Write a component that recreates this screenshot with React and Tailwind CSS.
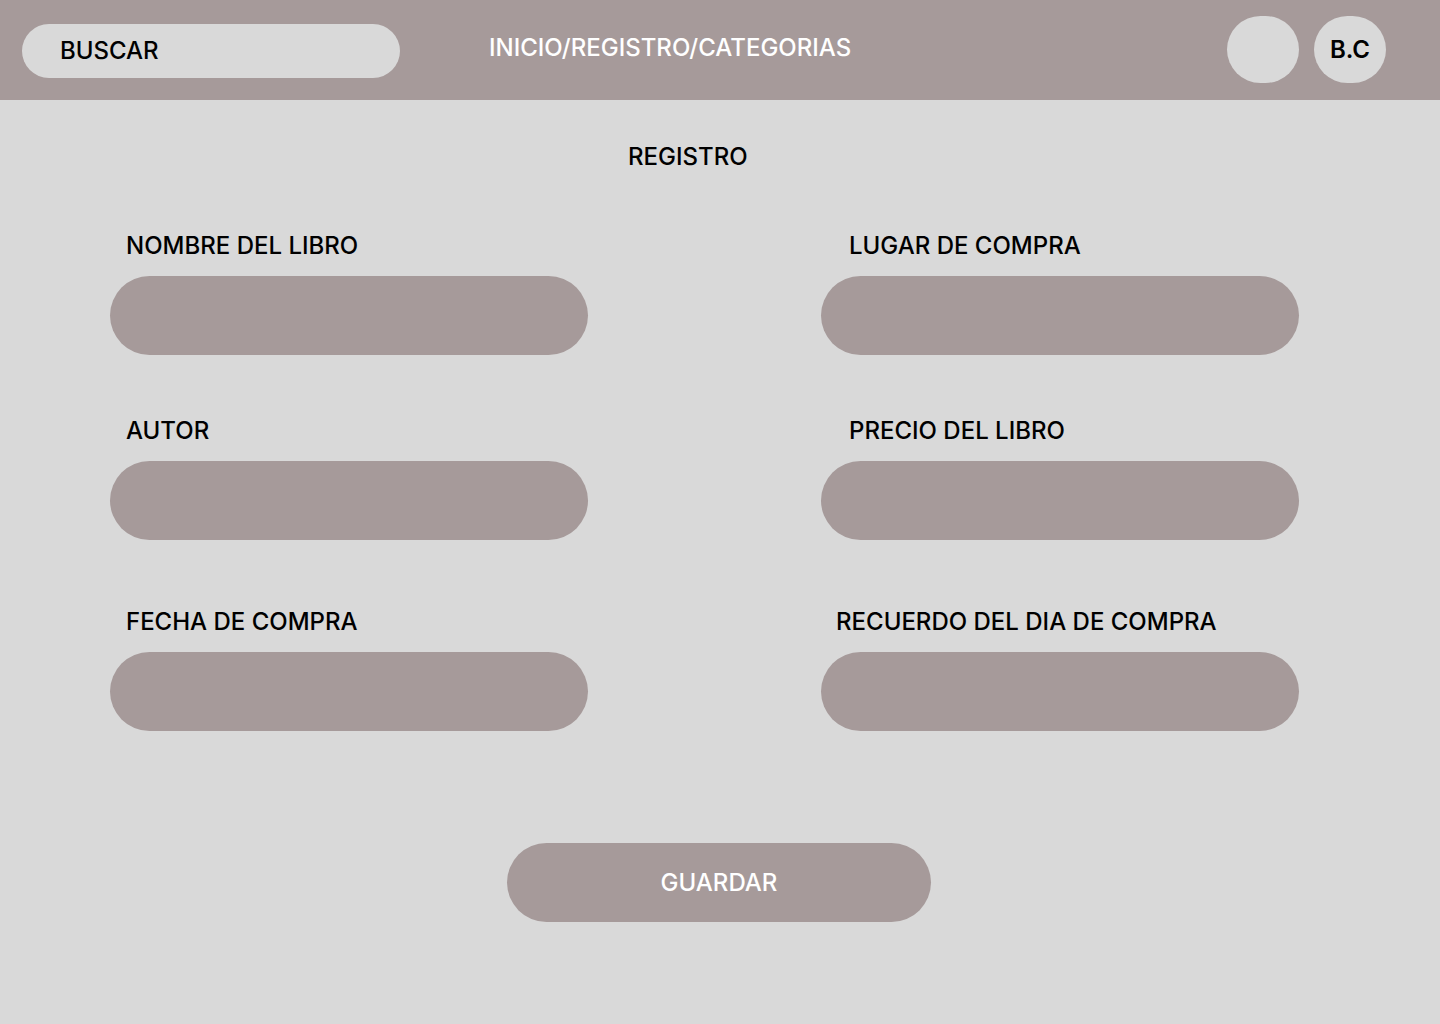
import React from "react";

const font = { fontFamily: "Inter, 'Noto Sans', sans-serif" };

function Field({ label, labelPad, className = "" }) {
  return (
    <div className={`flex flex-col ${className}`}>
      <div className={`text-[24px] leading-[29px] font-medium text-black ${labelPad}`}>{label}</div>
      <div className="mt-[16px] h-[79px] w-[478px] rounded-full bg-[#a69a9a]" />
    </div>
  );
}

export default function App() {
  return (
    <div className="min-h-[1024px] w-[1440px] bg-[#d9d9d9]" style={font}>
      <header className="flex h-[100px] items-start bg-[#a69a9a]">
        <div className="ml-[22px] mt-[24px] flex h-[54px] w-[378px] items-center rounded-full bg-[#d9d9d9] pl-[38px] text-[24px] font-medium text-black">
          BUSCAR
        </div>
        <div className="ml-[89px] mt-[33px] text-[24px] leading-[29px] font-medium text-white">
          INICIO/REGISTRO/CATEGORIAS
        </div>
        <div className="ml-auto mr-[54px] mt-[16px] flex gap-[15px]">
          <div className="h-[67px] w-[72px] rounded-full bg-[#d9d9d9]" />
          <div className="flex h-[67px] w-[72px] items-center justify-center rounded-full bg-[#d9d9d9] text-[24px] font-semibold text-black">
            B.C
          </div>
        </div>
      </header>
      <main className="flex flex-col">
        <div className="ml-[628px] mt-[42px] text-[24px] leading-[29px] font-medium text-black">REGISTRO</div>
        <div className="ml-[110px] mt-[60px] grid w-[1189px] grid-cols-[478px_478px] justify-between">
          <Field label="NOMBRE DEL LIBRO" labelPad="pl-[16px]" />
          <Field label="LUGAR DE COMPRA" labelPad="pl-[28px]" />
          <Field label="AUTOR" labelPad="pl-[16px]" className="mt-[61px]" />
          <Field label="PRECIO DEL LIBRO" labelPad="pl-[28px]" className="mt-[61px]" />
          <Field label="FECHA DE COMPRA" labelPad="pl-[16px]" className="mt-[67px]" />
          <Field label="RECUERDO DEL DIA DE COMPRA" labelPad="pl-[15px]" className="mt-[67px]" />
        </div>
        <div className="ml-[507px] mt-[112px] flex h-[79px] w-[424px] items-center justify-center rounded-full bg-[#a69a9a] text-[24px] font-medium text-white">
          GUARDAR
        </div>
      </main>
    </div>
  );
}
